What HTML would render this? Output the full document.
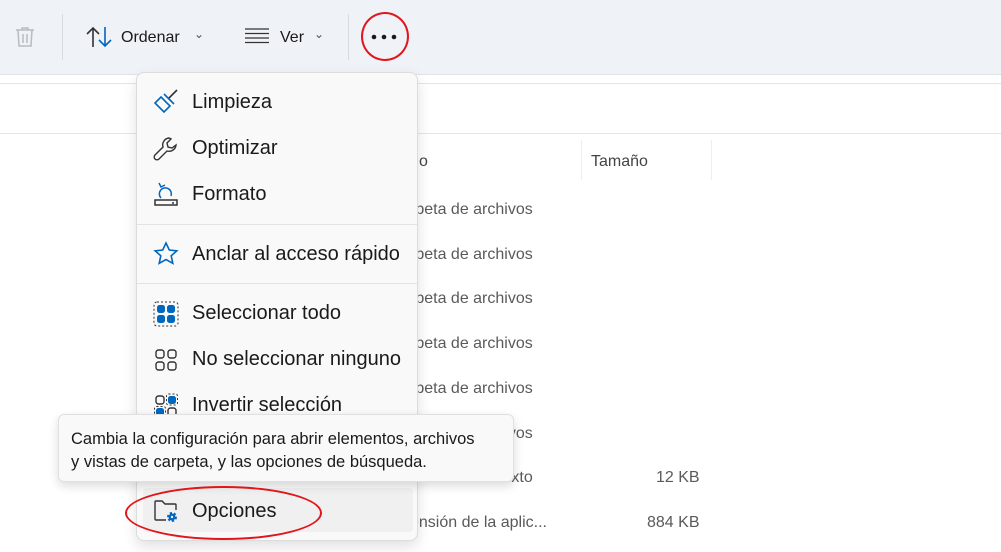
<!DOCTYPE html>
<html><head><meta charset="utf-8"><style>
*{margin:0;padding:0;box-sizing:border-box}
body{width:1001px;height:552px;overflow:hidden;background:#fff;font-family:"Liberation Sans",sans-serif;position:relative}
.tb{position:absolute;left:0;top:0;width:1001px;height:75px;background:#eff2f7;border-bottom:1px solid #e0e3e8}
.a{position:absolute}
.t{position:absolute;font-size:16px;color:#1a1a1a}
.row{position:absolute;left:410px;font-size:16px;color:#5a5a5a}
.menu{position:absolute;left:136px;top:72px;width:282px;height:469px;background:#f9f9f9;border:1px solid #dcdcdc;border-radius:8px;box-shadow:0 6px 14px rgba(0,0,0,.12)}
.mi{position:absolute;left:55px;font-size:20px;color:#1a1a1a}
.sep{position:absolute;left:0;width:280px;height:1px;background:#e3e3e3}
.ic{position:absolute;left:16px}
</style></head><body>
<div class="tb"></div>
<svg class="a" style="left:13px;top:25px" width="24" height="24" viewBox="0 0 24 24" fill="none" stroke="#b8bcc2" stroke-width="1.5"><path d="M3 5h18M9 5V3h6v2M5 5l1 16h12l1-16M10 9v9M14 9v9"/></svg>
<div class="a" style="left:62px;top:14px;width:1px;height:46px;background:#d8dbe0"></div>
<svg class="a" style="left:86px;top:26px" width="26" height="22" viewBox="0 0 26 22" fill="none" stroke-width="1.6"><path d="M7 21V2M1 8l6-6 6 6" stroke="#333"/><path d="M19 1v19M13 14l6 6 6-6" stroke="#0067c0"/></svg>
<div class="t" style="left:121px;top:29px">Ordenar</div>
<div class="t" style="left:194px;top:27px;font-size:12px;color:#555">&#8964;</div>
<svg class="a" style="left:245px;top:28px" width="24" height="16" viewBox="0 0 24 16" stroke="#333" stroke-width="1.3"><path d="M0 1h24M0 5.5h24M0 10h24M0 14.5h24"/></svg>
<div class="t" style="left:280px;top:29px">Ver</div>
<div class="t" style="left:314px;top:27px;font-size:12px;color:#555">&#8964;</div>
<div class="a" style="left:348px;top:14px;width:1px;height:46px;background:#d8dbe0"></div>
<svg class="a" style="left:370px;top:33px" width="28" height="8" viewBox="0 0 28 8" fill="#1a1a1a"><circle cx="4" cy="4" r="2.3"/><circle cx="14" cy="4" r="2.3"/><circle cx="24" cy="4" r="2.3"/></svg>
<div class="a" style="left:361px;top:12px;width:48px;height:49px;border:2.5px solid #e0161b;border-radius:50%"></div>

<div class="a" style="left:0;top:83px;width:1001px;height:1px;background:#e5e5e5"></div>
<div class="a" style="left:0;top:133px;width:1001px;height:1px;background:#e5e5e5"></div>
<div class="t" style="left:419px;top:153px;color:#444">o</div>
<div class="a" style="left:581px;top:140px;width:1px;height:40px;background:#eee"></div>
<div class="t" style="left:591px;top:153px;color:#444">Tamaño</div>
<div class="a" style="left:711px;top:140px;width:1px;height:40px;background:#eee"></div>
<div class="row" style="top:201px">rpeta de archivos</div>
<div class="row" style="top:246px">rpeta de archivos</div>
<div class="row" style="top:290px">rpeta de archivos</div>
<div class="row" style="top:335px">rpeta de archivos</div>
<div class="row" style="top:380px">rpeta de archivos</div>
<div class="row" style="top:425px">rpeta de archivos</div>
<div class="row" style="top:469px">cumento de texto</div>
<div class="row" style="top:514px">ensión de la aplic...</div>
<div class="row" style="left:656px;top:469px">12 KB</div>
<div class="row" style="left:647px;top:514px">884 KB</div>

<div class="menu">
<svg class="ic" style="top:16px" width="26" height="26" viewBox="0 0 26 26" fill="none" stroke-width="1.6"><path d="M15 10L24 1" stroke="#333"/><path d="M8 8l9 9-6 6L2 14z" stroke="#0067c0"/><path d="M11 5l10 10" stroke="#0067c0"/></svg>
<div class="mi" style="top:18px">Limpieza</div>
<svg class="ic" style="top:63px" width="26" height="26" viewBox="0 0 26 26" fill="none" stroke="#333" stroke-width="1.4"><path d="M16 2a7 7 0 0 0-6 9L2 19a2.5 2.5 0 0 0 4 4l8-8a7 7 0 0 0 9-6l-4 3-4-1-1-4 4-4z"/></svg>
<div class="mi" style="top:64px">Optimizar</div>
<svg class="ic" style="top:108px" width="26" height="26" viewBox="0 0 26 26" fill="none" stroke-width="1.5"><path d="M2 19h22v5H2z" stroke="#333"/><path d="M19 22h2" stroke="#333"/><path d="M8 17a6 6 0 1 1 10-2M6 2l2 4 4-2" stroke="#0067c0"/></svg>
<div class="mi" style="top:110px">Formato</div>
<div class="sep" style="top:151px"></div>
<svg class="ic" style="top:168px" width="26" height="26" viewBox="0 0 26 26" fill="none" stroke="#0067c0" stroke-width="1.6"><path d="M13 2l3.3 7 7.5.8-5.6 5 1.6 7.5L13 18.5 6.2 22.3l1.6-7.5-5.6-5 7.5-.8z"/></svg>
<div class="mi" style="top:170px">Anclar al acceso rápido</div>
<div class="sep" style="top:210px"></div>
<svg class="ic" style="top:228px" width="26" height="26" viewBox="0 0 26 26"><rect x="1" y="1" width="24" height="24" rx="3" fill="none" stroke="#333" stroke-dasharray="2 2"/><rect x="4" y="4" width="8" height="8" rx="2.5" fill="#0067c0"/><rect x="14" y="4" width="8" height="8" rx="2.5" fill="#0067c0"/><rect x="4" y="14" width="8" height="8" rx="2.5" fill="#0067c0"/><rect x="14" y="14" width="8" height="8" rx="2.5" fill="#0067c0"/></svg>
<div class="mi" style="top:229px">Seleccionar todo</div>
<svg class="ic" style="top:274px" width="26" height="26" viewBox="0 0 26 26" fill="none" stroke="#333" stroke-width="1.4"><rect x="3" y="3" width="8" height="8" rx="2.5"/><rect x="15" y="3" width="8" height="8" rx="2.5"/><rect x="3" y="15" width="8" height="8" rx="2.5"/><rect x="15" y="15" width="8" height="8" rx="2.5"/></svg>
<div class="mi" style="top:275px">No seleccionar ninguno</div>
<svg class="ic" style="top:320px" width="26" height="26" viewBox="0 0 26 26"><rect x="3" y="3" width="8" height="8" rx="2.5" fill="none" stroke="#333" stroke-width="1.4"/><rect x="13.5" y="1" width="11" height="11" rx="2" fill="none" stroke="#333" stroke-dasharray="2 2"/><rect x="15" y="3" width="8" height="8" rx="2.5" fill="#0067c0"/><rect x="1.5" y="13.5" width="11" height="11" rx="2" fill="none" stroke="#333" stroke-dasharray="2 2"/><rect x="3" y="15" width="8" height="8" rx="2.5" fill="#0067c0"/><rect x="15" y="15" width="8" height="8" rx="2.5" fill="none" stroke="#333" stroke-width="1.4"/></svg>
<div class="mi" style="top:321px">Invertir selección</div>
<div class="a" style="left:6px;top:415px;width:270px;height:44px;background:#f0f0f0;border-radius:4px"></div>
<svg class="ic" style="top:425px" width="26" height="26" viewBox="0 0 26 26" fill="none" stroke-width="1.4"><path d="M13 22H3a1 1 0 0 1-1-1V4a1 1 0 0 1 1-1h6l3 3h10a1 1 0 0 1 1 1v5" stroke="#333"/><circle cx="19" cy="19" r="3.5" fill="#0067c0" stroke="#0067c0" stroke-width="3" stroke-dasharray="2 1.6"/><circle cx="19" cy="19" r="1.2" fill="#f0f0f0" stroke="none"/></svg>
<div class="mi" style="top:427px">Opciones</div>
</div>

<div class="a" style="left:58px;top:414px;width:456px;height:68px;background:#f9f9f9;border:1px solid #e0e0e0;border-radius:6px;box-shadow:0 4px 10px rgba(0,0,0,.14);padding:13px 0 0 12px;font-size:16.5px;line-height:23px;color:#1a1a1a">Cambia la configuración para abrir elementos, archivos<br>y vistas de carpeta, y las opciones de búsqueda.</div>

<div class="a" style="left:125px;top:486px;width:197px;height:54px;border:2.5px solid #e0161b;border-radius:50%"></div>
</body></html>
